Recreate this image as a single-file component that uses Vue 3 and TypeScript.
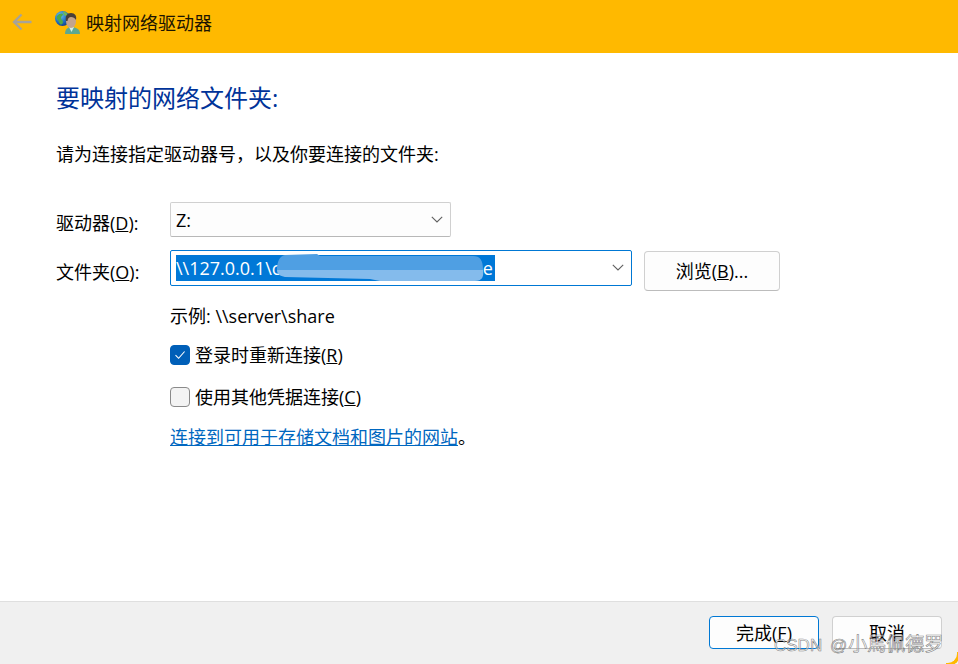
<script setup lang="ts">
const footerButtons: { label: string; key: string; primary: boolean }[] = [
  { label: '完成(', key: 'F', primary: true },
  { label: '取消', key: '', primary: false },
]
</script>

<template>
  <div class="window">
    <header class="titlebar">
      <svg class="back" width="20" height="18" viewBox="0 0 20 18" fill="none">
        <path d="M9.500 1.500 2 9l7.500 7.500M2 9H19.500" stroke="#a8a398" stroke-width="2.400" />
      </svg>
      <svg class="app-icon" width="26" height="24" viewBox="0 0 26 24">
        <defs>
          <radialGradient id="globe" cx="35%" cy="30%" r="75%">
            <stop offset="0" stop-color="#6fc0ee" />
            <stop offset="0.6" stop-color="#1f70c2" />
            <stop offset="1" stop-color="#123f86" />
          </radialGradient>
        </defs>
        <circle cx="7.500" cy="8.500" r="7.500" fill="url(#globe)" />
        <path d="M2 6c2-3 5-3 6-2 0 2-2 2-2 4s2 2 2 4-2 3-3 2-1-3-2-4-2-2-1-4z" fill="#4fa84a" />
        <path d="M8 1.500c2 0 4 1.500 5 3.500l-3 1c-1-1-2-3-2-4.500z" fill="#6db85a" />
        <path d="M10 24c0-5 3-7 6-7 5 0 9 2 9 7z" fill="#5ea890" />
        <path d="M14 17l2.500 5 2.500-5z" fill="#d8efe4" />
        <ellipse cx="16" cy="11" rx="5" ry="7" fill="#c4a48c" />
        <path d="M11 11c-1-5 1-8 5-8s6 3 5 7c-1-2-3-3-5-3-2 0-3 1-3.500 4z" fill="#4a3f38" />
      </svg>
      <span class="title">映射网络驱动器</span>
    </header>

    <main class="content">
      <h1 class="heading">要映射的网络文件夹:</h1>
      <p class="intro">请为连接指定驱动器号，以及你要连接的文件夹:</p>

      <div class="form">
        <label class="label label-drive">驱动器(<u>D</u>):</label>
        <div class="select">
          <span class="value">Z:</span>
          <svg class="chevron" width="12" height="7" viewBox="0 0 12 7" fill="none">
            <path d="M.8.8 6 6l5.200-5.200" stroke="#606060" stroke-width="1.100" />
          </svg>
        </div>
        <span></span>

        <label class="label label-folder">文件夹(<u>O</u>):</label>
        <div class="select select-focus">
          <span class="selected">\\127.0.0.1\<span class="hidden-part">c</span>e</span>
          <svg class="redact" width="210" height="30" viewBox="0 0 210 30">
            <path d="M1 17C1 8 4 3 9 2L41 1 44 3H197C204 3 207 7 207 17Z" fill="#4f9fe3" />
            <path d="M1 17H207C208 24 206 28 199 28H104L94 26 9 24C4 23 1 21 1 17Z" fill="#84bbec" />
          </svg>
          <svg class="chevron" width="12" height="7" viewBox="0 0 12 7" fill="none">
            <path d="M.8.8 6 6l5.200-5.200" stroke="#606060" stroke-width="1.100" />
          </svg>
        </div>
        <button class="btn btn-browse" type="button">浏览(<u>B</u>)...</button>
      </div>

      <div class="options">
        <p class="example">示例: \\server\share</p>
        <div class="check-row check-first">
          <span class="box box-on">
            <svg width="12" height="10" viewBox="0 0 12 10" fill="none">
              <path d="M1.500 5.200 4.600 8.300 10.600 1.500" stroke="#fff" stroke-width="1.100" />
            </svg>
          </span>
          <span>登录时重新连接(<u>R</u>)</span>
        </div>
        <div class="check-row check-second">
          <span class="box"></span>
          <span>使用其他凭据连接(<u>C</u>)</span>
        </div>
        <p class="link-row"><a class="link">连接到可用于存储文档和图片的网站</a>。</p>
      </div>
    </main>

    <footer class="footer">
      <button
        v-for="b in footerButtons"
        :key="b.label"
        class="btn btn-footer"
        :class="{ 'btn-primary': b.primary }"
        type="button"
      >
        {{ b.label }}<template v-if="b.key"><u>{{ b.key }}</u>)</template>
      </button>
    </footer>

    <div class="watermark">CSDN @<span class="watermark-name">小馬佩德罗</span></div>
    <div class="corner"></div>
  </div>
</template>

<style>
html, body { margin: 0; background: #fff; }
</style>

<style scoped>
.window {
  position: relative;
  width: 958px;
  height: 664px;
  overflow: hidden;
  display: flex;
  flex-direction: column;
  background: #fff;
  color: #000;
  font-family: "Open Sans", "Noto Sans CJK SC", sans-serif;
  font-size: 18px;
}
.titlebar {
  flex: 0 0 53px;
  height: 53px;
  box-sizing: border-box;
  background: #ffb900;
  display: flex;
  align-items: center;
  padding: 0 0 9px 12px;
}
.back { margin-right: 23px; }
.app-icon { margin-right: 5px; }
.title { font-family: "Noto Sans CJK SC", sans-serif; font-size: 18px; color: #1c1400; line-height: 24px; }
.content {
  flex: 1;
  min-height: 0;
  padding: 0 0 0 56px;
}
.heading {
  margin: 29px 0 0;
  font-size: 24px;
  font-weight: 400;
  line-height: 32px;
  color: #003399;
}
.intro {
  margin: 28px 0 0;
  line-height: 24px;
}
.form {
  margin-top: 36px;
  display: grid;
  grid-template-columns: 114px 462px 136px;
  column-gap: 0;
  row-gap: 13px;
  align-items: start;
}
.label { line-height: 24px; white-space: nowrap; }
.label-drive { padding-top: 9px; }
.label-folder { padding-top: 10px; }
.select {
  position: relative;
  box-sizing: border-box;
  height: 35px;
  width: 281px;
  background: #fdfdfd;
  border: 1px solid #d0d0d0;
  border-bottom-color: #b8b8b8;
  border-radius: 2px;
  display: flex;
  align-items: center;
  padding-left: 5px;
}
.value { line-height: 24px; }
.chevron { position: absolute; right: 7px; top: 13px; }
.select-focus {
  width: 462px;
  height: 36px;
  background: #fff;
  border-color: #0078d4;
}
.selected {
  background: #0078d7;
  color: #fff;
  line-height: 26px;
  height: 26px;
  display: block;
  width: 319px;
  overflow: hidden;
  white-space: nowrap;
}
.hidden-part { display: inline-block; width: 211px; }
.redact { position: absolute; left: 105px; top: 2px; }
.btn {
  box-sizing: border-box;
  font: inherit;
  color: #000;
  background: #fdfdfd;
  border: 1px solid #d0d0d0;
  border-bottom-color: #bcbcbc;
  border-radius: 4px;
  padding: 0;
  line-height: 24px;
  white-space: nowrap;
}
.btn-browse { width: 136px; height: 40px; margin: 1px 0 0 12px; }
.options { margin-left: 114px; }
.example { margin: 13px 0 0; line-height: 24px; }
.check-row {
  display: flex;
  align-items: center;
  gap: 5px;
  height: 24px;
  line-height: 24px;
}
.check-first { margin-top: 15px; }
.check-second { margin-top: 18px; }
.box {
  box-sizing: border-box;
  width: 20px;
  height: 20px;
  border-radius: 4px;
  background: #f3f3f3;
  border: 1px solid #8a8a8a;
  display: flex;
  align-items: center;
  justify-content: center;
}
.box-on { background: #005fb8; border-color: #005fb8; }
.link-row { margin: 16px 0 0; line-height: 24px; }
.link { color: #0067c0; text-decoration: underline; }
.footer {
  flex: 0 0 63px;
  height: 63px;
  box-sizing: border-box;
  background: #f0f0f0;
  border-top: 1px solid #dfdfdf;
  display: flex;
  justify-content: flex-end;
  align-items: flex-start;
  gap: 13px;
  padding: 14px 16px 0 0;
}
.btn-footer { width: 110px; height: 33px; }
.btn-primary { border: 1px solid #0078d4; }
.watermark {
  position: absolute;
  left: 774px;
  top: 632px;
  font-family: "Liberation Sans", "Noto Sans CJK SC", sans-serif;
  font-size: 17px;
  line-height: 26px;
  word-spacing: 3px;
  white-space: nowrap;
  color: rgba(255, 255, 255, 0.5);
  -webkit-text-stroke: 0.6px rgba(90, 90, 90, 0.75);
}
.watermark-name { font-size: 19px; margin-left: 1px; }
.corner {
  position: absolute;
  right: -2px;
  bottom: -2px;
  width: 14px;
  height: 14px;
  border-bottom-right-radius: 12px;
  border-right: 3px solid #ffb900;
  border-bottom: 3px solid #ffb900;
  box-sizing: border-box;
}
</style>
